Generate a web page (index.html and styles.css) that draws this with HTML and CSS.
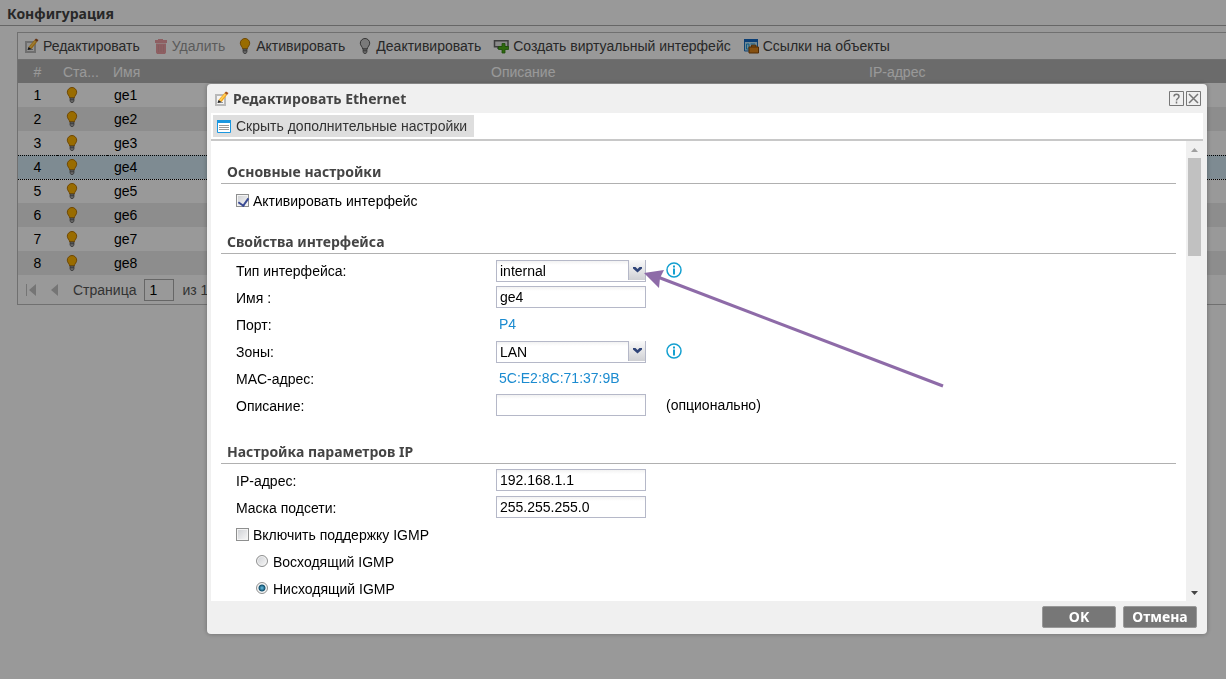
FILE: index.html
```html
<!DOCTYPE html>
<html lang="ru">
<head>
    <meta charset="UTF-8">
    <meta name="viewport" content="width=device-width, initial-scale=1.0">
    <title>Конфигурация</title>
    <link rel="stylesheet" href="styles.css">
</head>
<body>

    <svg class="sprite" aria-hidden="true">
        <symbol id="i-edit" viewBox="0 0 16 16">
            <path fill="#b9b9b9" d="M2 3h11v12H2z"/>
            <path fill="#f4f4f4" d="M4 5h7v8H4z"/>
            <path fill="#999" d="M5 11h5v1H5z"/>
            <path fill="#f5a71c" d="M11.500 2l2.500 2-5.500 7L5.500 9z"/>
            <path fill="#ffd15c" d="M12 2.500l1 1L7.500 10l-1-1z"/>
            <path fill="#222" d="M5.500 9l3 2L4.500 12z"/>
            <path fill="#a4521c" d="M13 .5l2.500 1.500L14 4l-2.500-2z"/>
        </symbol>
        <symbol id="i-trash" viewBox="0 0 16 16">
            <path fill="#e0525a" d="M6 1h5v1h4v3H3V2h3zM4 5.500h10v9L13 16H5l-1-1.500z"/>
            <path fill="#c24a52" d="M6 7h1v7H6zM8.500 7h1v7h-1zM11 7h1v7h-1z"/>
        </symbol>
        <symbol id="i-bulb" viewBox="0 0 12 16">
            <path class="glass" stroke-width="1" d="M6 .5a4.700 4.700 0 0 1 4.700 4.700C10.700 7.500 8.500 9 8.200 11H3.800C3.500 9 1.300 7.500 1.300 5.200A4.700 4.700 0 0 1 6 .5z"/>
            <path fill="#aaa" stroke="#555" stroke-width=".7" d="M4 11h4v3L7 15.500H5L4 14z"/>
            <path stroke="#555" stroke-width=".8" d="M4 12.700h4"/>
        </symbol>
        <symbol id="i-create" viewBox="0 0 16 16">
            <path fill="#e8e8e8" stroke="#666" stroke-width="1.500" d="M1.500 2.800H15v6H1.500z"/>
            <path stroke="#666" stroke-width="1.500" d="M4 10h4"/>
            <path fill="#4fae18" stroke="#2f7d10" stroke-width=".8" d="M9 5.500h3v3h3.500v3H12v3.500H9v-3.500H5.500v-3H9z"/>
        </symbol>
        <symbol id="i-refs" viewBox="0 0 16 16">
            <path fill="#bfe4f8" stroke="#1c72c0" d="M1.500 2.500h13v10.500h-13z"/>
            <path fill="#1168c4" d="M1 1h14v3H1z"/>
            <path fill="none" stroke="#1c9ad8" d="M3.500 6H6v5H3.500zM7.500 6H12"/>
            <path fill="#e0861c" stroke="#8a4a08" d="M6 9h9.500v6H6zM8.500 9V7.200h4.500V9"/>
        </symbol>
        <symbol id="i-list" viewBox="0 0 14 14">
            <path fill="#fff" stroke="#1a97e0" d="M.5 1.500h13v12H.5z"/>
            <path fill="#1a97e0" d="M0 1h14v3H0z"/>
            <path stroke="#999" d="M2 6.500h10M2 8.500h10M2 10.500h10"/>
        </symbol>
        <symbol id="i-info" viewBox="0 0 16 16">
            <circle cx="8" cy="8" r="7" fill="#fff" stroke="#14a0d0" stroke-width="1.500"/>
            <path fill="#14a0d0" d="M7 3.500h2v2H7zM7 6.500h2v6H7z"/>
        </symbol>
        <symbol id="i-chevron" viewBox="0 0 9 6">
            <path fill="#2f4478" d="M0 0h2.500l2 2 2-2H9v1.500L4.500 5.500 0 1.500z"/>
        </symbol>
    </svg>

    <main class="page">
        <h1>Конфигурация</h1>
        <div class="panel">
            <div class="toolbar">
                <button type="button"><svg class="icon"><use href="#i-edit"/></svg>Редактировать</button>
                <button type="button" class="muted"><svg class="icon"><use href="#i-trash"/></svg>Удалить</button>
                <button type="button"><svg class="icon bulb"><use href="#i-bulb"/></svg>Активировать</button>
                <button type="button"><svg class="icon bulb off"><use href="#i-bulb"/></svg>Деактивировать</button>
                <button type="button"><svg class="icon"><use href="#i-create"/></svg>Создать виртуальный интерфейс</button>
                <button type="button"><svg class="icon"><use href="#i-refs"/></svg>Ссылки на объекты</button>
            </div>
            <table>
                <colgroup>
                    <col class="col-num">
                    <col class="col-status">
                    <col class="col-name">
                    <col class="col-desc">
                    <col>
                </colgroup>
                <thead>
                    <tr><th>#</th><th>Ста...</th><th>Имя</th><th>Описание</th><th>IP-адрес</th></tr>
                </thead>
                <tbody>
                    <tr><td>1</td><td><svg class="icon bulb"><use href="#i-bulb"/></svg></td><td>ge1</td><td></td><td></td></tr>
                    <tr><td>2</td><td><svg class="icon bulb"><use href="#i-bulb"/></svg></td><td>ge2</td><td></td><td></td></tr>
                    <tr><td>3</td><td><svg class="icon bulb"><use href="#i-bulb"/></svg></td><td>ge3</td><td></td><td></td></tr>
                    <tr class="selected"><td>4</td><td><svg class="icon bulb"><use href="#i-bulb"/></svg></td><td>ge4</td><td></td><td></td></tr>
                    <tr><td>5</td><td><svg class="icon bulb"><use href="#i-bulb"/></svg></td><td>ge5</td><td></td><td></td></tr>
                    <tr><td>6</td><td><svg class="icon bulb"><use href="#i-bulb"/></svg></td><td>ge6</td><td></td><td></td></tr>
                    <tr><td>7</td><td><svg class="icon bulb"><use href="#i-bulb"/></svg></td><td>ge7</td><td></td><td></td></tr>
                    <tr><td>8</td><td><svg class="icon bulb"><use href="#i-bulb"/></svg></td><td>ge8</td><td></td><td></td></tr>
                </tbody>
            </table>
            <div class="pager">
                <button type="button" aria-label="Первая"><svg width="12" height="14"><path fill="#c4c4c4" d="M1 1h1v12H1zM11 1v12L4 7z"/></svg></button>
                <button type="button" aria-label="Назад"><svg width="8" height="14"><path fill="#c4c4c4" d="M7 1v12L0 7z"/></svg></button>
                <label for="pageNum">Страница</label>
                <input type="text" id="pageNum" value="1">
                <span>из 1</span>
            </div>
        </div>
    </main>

    <div class="overlay">
        <form class="dialog" role="dialog" aria-labelledby="dialogTitle">
            <header class="dialog-header">
                <svg class="icon"><use href="#i-edit"/></svg>
                <h2 id="dialogTitle">Редактировать Ethernet</h2>
                <button type="button" aria-label="Справка"><svg width="15" height="15" fill="none" stroke="#777"><path d="M.5.500h14v14H.5z"/><path stroke-width="1.500" d="M5 5.500C5 2.500 10 2.500 10 5.500 10 7.500 7.500 7.500 7.500 9.500M7.500 10.500v2"/></svg></button>
                <button type="button" aria-label="Закрыть"><svg width="15" height="15" fill="none" stroke="#777"><path d="M.5.500h14v14H.5z"/><path stroke-width="1.500" d="M3 3l9 9M12 3l-9 9"/></svg></button>
            </header>
            <div class="dialog-toolbar">
                <button type="button"><svg class="icon-list"><use href="#i-list"/></svg>Скрыть дополнительные настройки</button>
            </div>
            <div class="dialog-body">
                <div class="content">
                    <section>
                        <h3>Основные настройки</h3>
                        <div class="row check">
                            <input type="checkbox" id="enable" checked>
                            <label for="enable">Активировать интерфейс</label>
                        </div>
                    </section>
                    <section class="properties">
                        <h3>Свойства интерфейса</h3>
                        <div class="row">
                            <label for="type">Тип интерфейса:</label>
                            <div class="combo">
                                <select id="type"><option>internal</option></select>
                                <span class="trigger"><svg><use href="#i-chevron"/></svg></span>
                            </div>
                            <svg class="info"><use href="#i-info"/></svg>
                        </div>
                        <div class="row">
                            <label for="name">Имя :</label>
                            <input type="text" id="name" value="ge4">
                        </div>
                        <div class="row">
                            <span class="label">Порт:</span>
                            <span class="value">P4</span>
                        </div>
                        <div class="row">
                            <label for="zone">Зоны:</label>
                            <div class="combo">
                                <select id="zone"><option>LAN</option></select>
                                <span class="trigger"><svg><use href="#i-chevron"/></svg></span>
                            </div>
                            <svg class="info"><use href="#i-info"/></svg>
                        </div>
                        <div class="row">
                            <span class="label">MAC-адрес:</span>
                            <span class="value">5C:E2:8C:71:37:9B</span>
                        </div>
                        <div class="row">
                            <label for="desc">Описание:</label>
                            <input type="text" id="desc">
                            <span class="hint">(опционально)</span>
                        </div>
                    </section>
                    <section>
                        <h3>Настройка параметров IP</h3>
                        <div class="row">
                            <label for="ip">IP-адрес:</label>
                            <input type="text" id="ip" value="192.168.1.1">
                        </div>
                        <div class="row">
                            <label for="mask">Маска подсети:</label>
                            <input type="text" id="mask" value="255.255.255.0">
                        </div>
                        <div class="row check">
                            <input type="checkbox" id="igmp">
                            <label for="igmp">Включить поддержку IGMP</label>
                        </div>
                        <div class="row check nested">
                            <input type="radio" name="igmpMode" id="upstream">
                            <label for="upstream">Восходящий IGMP</label>
                        </div>
                        <div class="row check nested">
                            <input type="radio" name="igmpMode" id="downstream" checked>
                            <label for="downstream">Нисходящий IGMP</label>
                        </div>
                    </section>
                </div>
                <div class="scrollbar">
                    <svg width="17" height="17"><path fill="#a0a0a0" d="M5 11h7L8.500 7z"/></svg>
                    <div class="thumb"></div>
                    <svg width="17" height="17"><path fill="#444" d="M5 7h7l-3.500 4z"/></svg>
                </div>
            </div>
            <footer class="dialog-footer">
                <button type="submit">OK</button>
                <button type="button">Отмена</button>
            </footer>
        </form>
        <svg class="arrow" width="300" height="120" viewBox="0 0 300 120">
            <path stroke="#8e6ba8" stroke-width="3" d="M14 6.500L298 115"/>
            <path fill="#8e6ba8" d="M-1 2l20-3-4 8-1 10z"/>
        </svg>
    </div>

</body>
</html>
```
FILE: styles.css
```css
* {
    margin: 0;
    padding: 0;
    box-sizing: border-box;
}
body, button, input, select {
    font-family: "Liberation Sans", Arial, sans-serif;
    font-size: 14px;
}
h1, h2, h3, .dialog-footer button {
    font-family: "Noto Sans", sans-serif;
    font-size: 14px;
    font-weight: bold;
}
body {
    background: #fff;
    color: #000;
    line-height: 20px;
    overflow: hidden;
}
button {
    background: none;
    border: none;
    color: inherit;
    cursor: pointer;
}
svg {
    display: block;
    flex: none;
}
.sprite {
    position: absolute;
    width: 0;
    height: 0;
}
.icon {
    width: 16px;
    height: 16px;
}
.bulb {
    width: 12px;
    fill: #ffb400;
    stroke: #b87400;
}
.bulb.off {
    fill: #ccc;
    stroke: #555;
}

/* interface list */
h1 {
    height: 26px;
    padding: 4px 7px 0;
    border-bottom: 1px solid #aaa;
    color: #444;
}
.panel {
    margin: 6px 0 0 17px;
    border: 1px solid #bbb;
    border-right: none;
}
.toolbar {
    display: flex;
    gap: 12px;
    height: 27px;
    padding: 0 0 1px 5px;
    color: #444;
    border-bottom: 1px solid #bbb;
}
.toolbar button {
    display: flex;
    align-items: center;
    gap: 4px;
    white-space: nowrap;
}
.toolbar .bulb {
    margin: 0 1px 0 2px;
}
.toolbar .muted {
    opacity: 0.55;
}
table {
    width: 100%;
    table-layout: fixed;
    border-collapse: collapse;
}
.col-num {
    width: 39px;
}
.col-status {
    width: 50px;
}
.col-name, .col-desc {
    width: 378px;
}
th {
    height: 23px;
    padding: 0 6px;
    background: #b3b3b3;
    color: #fff;
    font-weight: normal;
    text-align: left;
}
td {
    height: 24px;
    padding: 0 7px;
}
th:first-child, td:first-child {
    text-align: center;
}
td .icon {
    margin-left: 2px;
}
tbody tr:nth-child(even) {
    background: #ebebeb;
}
tbody tr.selected {
    background: #d2e8f3;
}
.selected td {
    border-top: 1px dotted #000;
    border-bottom: 1px dotted #000;
}
.pager {
    display: flex;
    align-items: center;
    height: 29px;
    padding-left: 7px;
    color: #555;
}
.pager button {
    margin-right: 14px;
}
.pager input {
    width: 30px;
    height: 22px;
    margin: 0 8px;
    padding-left: 4px;
    border: 1px solid #aaa;
}

/* dialog */
.overlay {
    position: fixed;
    inset: 0;
    display: flex;
    padding: 84px 19px 45px 207px;
    background: rgba(0, 0, 0, 0.4);
}
.dialog {
    flex: 1;
    display: flex;
    flex-direction: column;
    padding: 0 4px;
    background: #f0f0f0;
    border-radius: 4px;
    box-shadow: 0 0 5px rgba(0, 0, 0, 0.3);
}
.dialog-header {
    display: flex;
    align-items: center;
    gap: 2px;
    height: 29px;
    padding: 0 2px;
}
.dialog-header h2 {
    flex: 1;
    color: #444;
    padding-left: 2px;
}
.dialog-toolbar {
    height: 28px;
    padding: 2px;
    background: #fff;
    border-bottom: 2px solid #c8c8c8;
}
.dialog-toolbar button {
    display: flex;
    align-items: center;
    gap: 5px;
    height: 22px;
    padding: 0 7px 0 4px;
    background: #dedede;
    color: #333;
}
.icon-list {
    width: 14px;
    height: 14px;
}
.dialog-body {
    flex: 1;
    display: flex;
    min-height: 0;
    background: #fff;
}
.content {
    flex: 1;
    display: flex;
    flex-direction: column;
    gap: 17px;
    padding: 20px 10px 0;
    overflow: hidden;
}
.properties {
    padding-bottom: 5px;
}
h3 {
    height: 23px;
    margin-bottom: 3px;
    padding-left: 6px;
    border-bottom: 1px solid #b0b0b0;
    line-height: 22px;
    color: #444;
}
.row {
    display: flex;
    height: 27px;
    padding: 2px 0 0 15px;
    line-height: 24px;
}
.row > label, .row > .label {
    width: 260px;
}
.row.check > label {
    width: auto;
    padding-left: 4px;
}
.row.nested {
    padding-left: 35px;
}
.row input[type="text"], .combo {
    width: 150px;
    height: 22px;
}
.row input[type="text"], select {
    padding: 0 3px;
    border: 1px solid #b5b8c8;
    background: linear-gradient(#f2f2f2, #fff 4px);
}
.combo {
    position: relative;
}
select {
    width: 100%;
    height: 100%;
    appearance: none;
}
.trigger {
    position: absolute;
    top: 1px;
    right: 0;
    display: flex;
    align-items: center;
    justify-content: center;
    width: 18px;
    height: 20px;
    border: solid #b5b8c8;
    border-width: 0 1px;
    background: linear-gradient(#fafafa, #cfd0d4);
    pointer-events: none;
}
.trigger svg {
    width: 9px;
    height: 6px;
}
.info {
    width: 16px;
    height: 16px;
    margin: 3px 0 0 20px;
}
.value {
    padding-left: 3px;
    line-height: 22px;
    color: #1b8bd0;
}
.hint {
    padding-left: 20px;
    line-height: 22px;
}
input[type="checkbox"], input[type="radio"] {
    appearance: none;
    width: 13px;
    height: 13px;
    margin-top: 5px;
    border: 1px solid #8e8f8f;
    background: linear-gradient(135deg, #cdcfd3, #f8f8f8);
    box-shadow: inset 0 0 0 1px #f4f4f4;
}
input[type="checkbox"]:checked::before {
    content: "";
    display: block;
    width: 5px;
    height: 8px;
    margin: 1px 0 0 3px;
    border: solid #3b4c94;
    border-width: 0 2px 2px 0;
    transform: rotate(35deg);
}
input[type="radio"] {
    width: 12px;
    height: 12px;
    margin-right: 1px;
    border-radius: 50%;
}
input[type="radio"]:checked {
    background: radial-gradient(circle, #6cc4e8, #10506e 3px, #f4f4f4 4px);
}
.scrollbar {
    display: flex;
    flex-direction: column;
    justify-content: space-between;
    width: 17px;
    background: #f0f0f0;
}
.thumb {
    height: 98px;
    margin: 0 2px auto;
    background: #c1c1c1;
}
.dialog-footer {
    display: flex;
    justify-content: flex-end;
    gap: 7px;
    height: 33px;
    padding: 5px 6px 0;
}
.dialog-footer button {
    width: 74px;
    height: 22px;
    padding-bottom: 2px;
    border: 1px solid #999;
    border-radius: 2px;
    background: #777;
    color: #fff;
}

/* pointer drawn over the dialog */
.arrow {
    position: absolute;
    left: 645px;
    top: 271px;
    overflow: visible;
    pointer-events: none;
}
```
